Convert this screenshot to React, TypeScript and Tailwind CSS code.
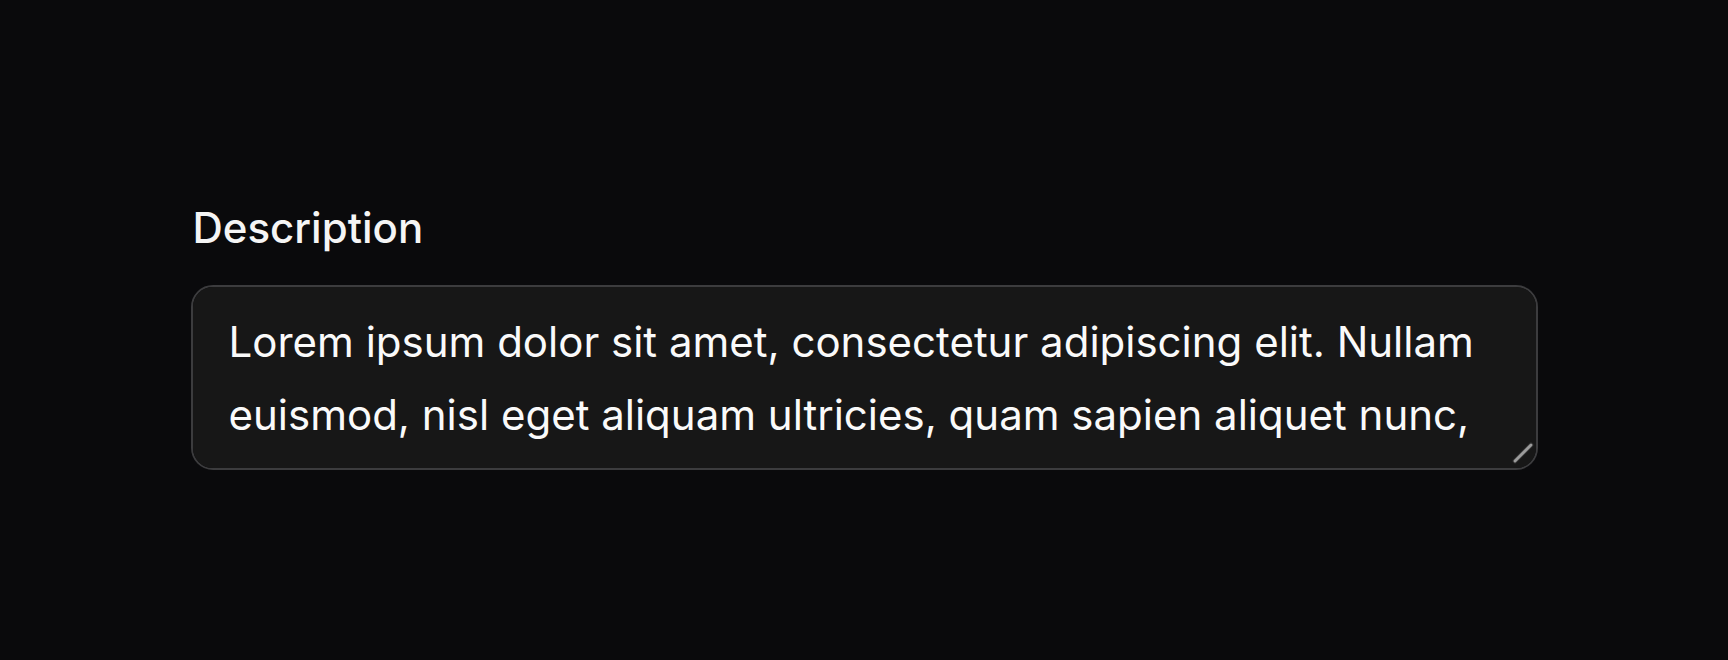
export default function App() {
  return (
    <div className="min-h-[660px] bg-[#0a0a0c] flex justify-center pt-[203px] font-['Inter',sans-serif] [color-scheme:dark]">
      <div className="w-[1347px] flex flex-col gap-[32px]">
        <label htmlFor="description" className="text-[42px] leading-[1.2] font-medium text-[#f5f5f5] pl-[2px]">
          Description
        </label>
        <div className="relative">
          <textarea
            id="description"
            rows={2}
            defaultValue="Lorem ipsum dolor sit amet, consectetur adipiscing elit. Nullam euismod, nisl eget aliquam ultricies, quam sapien aliquet nunc, eget aliquam nunc nisl sit amet nunc."
            className="block w-full h-[185px] resize-none rounded-[22px] border-2 border-[#3c3c3e] bg-[#171717] px-[36px] py-[18px] text-[42px] leading-[73px] text-[#fafafa] outline-none"
          />
          {/* resize grip */}
          <svg
            className="pointer-events-none absolute right-[4px] bottom-[6px]"
            width="22"
            height="22"
            viewBox="0 0 22 22"
          >
            <line x1="3" y1="19" x2="19" y2="3" stroke="#2a2a2a" strokeWidth="5" strokeLinecap="round" />
            <line x1="3" y1="19" x2="19" y2="3" stroke="#9b9b9b" strokeWidth="3" strokeLinecap="round" />
          </svg>
        </div>
      </div>
    </div>
  );
}
